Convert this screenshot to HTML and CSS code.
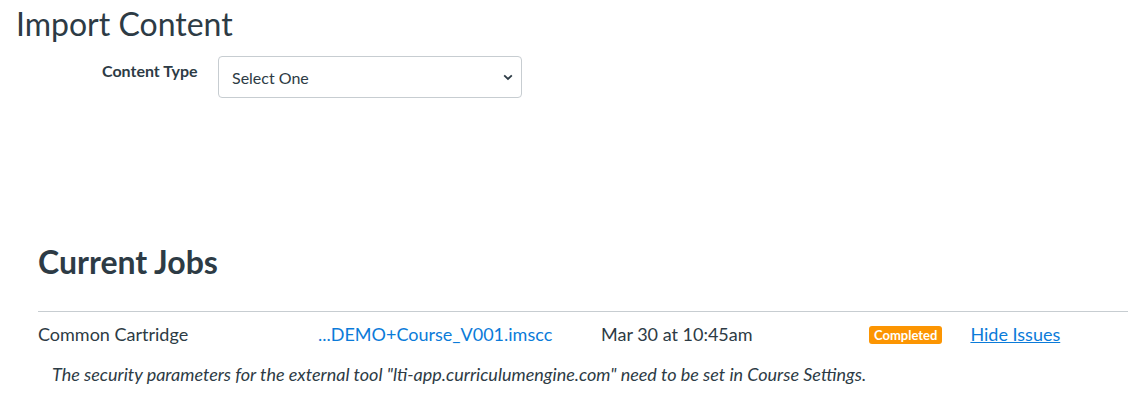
FILE: index.html
```html
<!DOCTYPE html>
<html>
<head>
<meta charset="utf-8">
<link rel="stylesheet" href="styles.css">
</head>
<body>
<div class="page">
  <h1 class="title">Import Content</h1>
  <div class="form-row">
    <label class="form-label">Content Type</label>
    <div class="select">
      <span>Select One</span>
      <svg class="chev" width="10" height="7" viewBox="0 0 10 7"><path d="M1.2 1.4 L5 5 L8.8 1.4" fill="none" stroke="#2D3B45" stroke-width="1.8"/></svg>
    </div>
  </div>
  <section class="jobs">
    <h2 class="jobs-title">Current Jobs</h2>
    <div class="job">
      <div class="job-row">
        <span>Common Cartridge</span>
        <a class="file" href="#">...DEMO+Course_V001.imscc</a>
        <span>Mar 30 at 10:45am</span>
        <span class="status"><span class="badge">Completed</span><a class="issues" href="#">Hide Issues</a></span>
      </div>
      <p class="issue">The security parameters for the external tool "lti-app.curriculumengine.com" need to be set in Course Settings.</p>
    </div>
  </section>
</div>
</body>
</html>
```
FILE: styles.css
```css
* { box-sizing: border-box; }
body {
  margin: 0;
  font-family: Lato, "Open Sans", "Liberation Sans", sans-serif;
  color: #2D3B45;
  background: #fff;
}
.page { padding: 4px 12px 0 16px; }
.title {
  margin: 0;
  font-size: 32px;
  font-weight: 400;
  line-height: 40px;
}
.form-row {
  display: flex;
  align-items: flex-start;
  margin-top: 12px;
  padding-left: 86px;
}
.form-label {
  width: 94px;
  text-align: right;
  font-weight: 700;
  font-size: 16px;
  line-height: 20px;
  padding-top: 5px;
  white-space: nowrap;
}
.select {
  margin-left: 22px;
  width: 304px;
  height: 42px;
  border: 1px solid #C7CDD1;
  border-radius: 4px;
  display: flex;
  align-items: center;
  justify-content: space-between;
  padding: 0 8px 0 13px;
  font-size: 16px;
}
.chev { margin-top: 1px; }
.jobs { padding-left: 22px; margin-top: 145px; }
.jobs-title {
  margin: 0;
  font-size: 32px;
  font-weight: 700;
  line-height: 38px;
}
.job {
  margin-top: 30px;
  border-top: 1px solid #C7CDD1;
}
.job-row {
  display: grid;
  grid-template-columns: 280px 283px 268px 1fr;
  align-items: center;
  padding-top: 11px;
  font-size: 18px;
  line-height: 22px;
}
.file { color: #0B7BD9; text-decoration: none; }
.status { display: flex; align-items: center; }
.badge {
  background: #FC9502;
  color: #fff;
  font-size: 13px;
  font-weight: 700;
  line-height: 18px;
  padding: 0 5px;
  border-radius: 3px;
  margin-top: 2px;
}
.issues { color: #0B7BD9; margin-left: 28px; }
.issue {
  margin: 18px 0 0 14px;
  font-style: italic;
  font-size: 18px;
  line-height: 22px;
}
```
